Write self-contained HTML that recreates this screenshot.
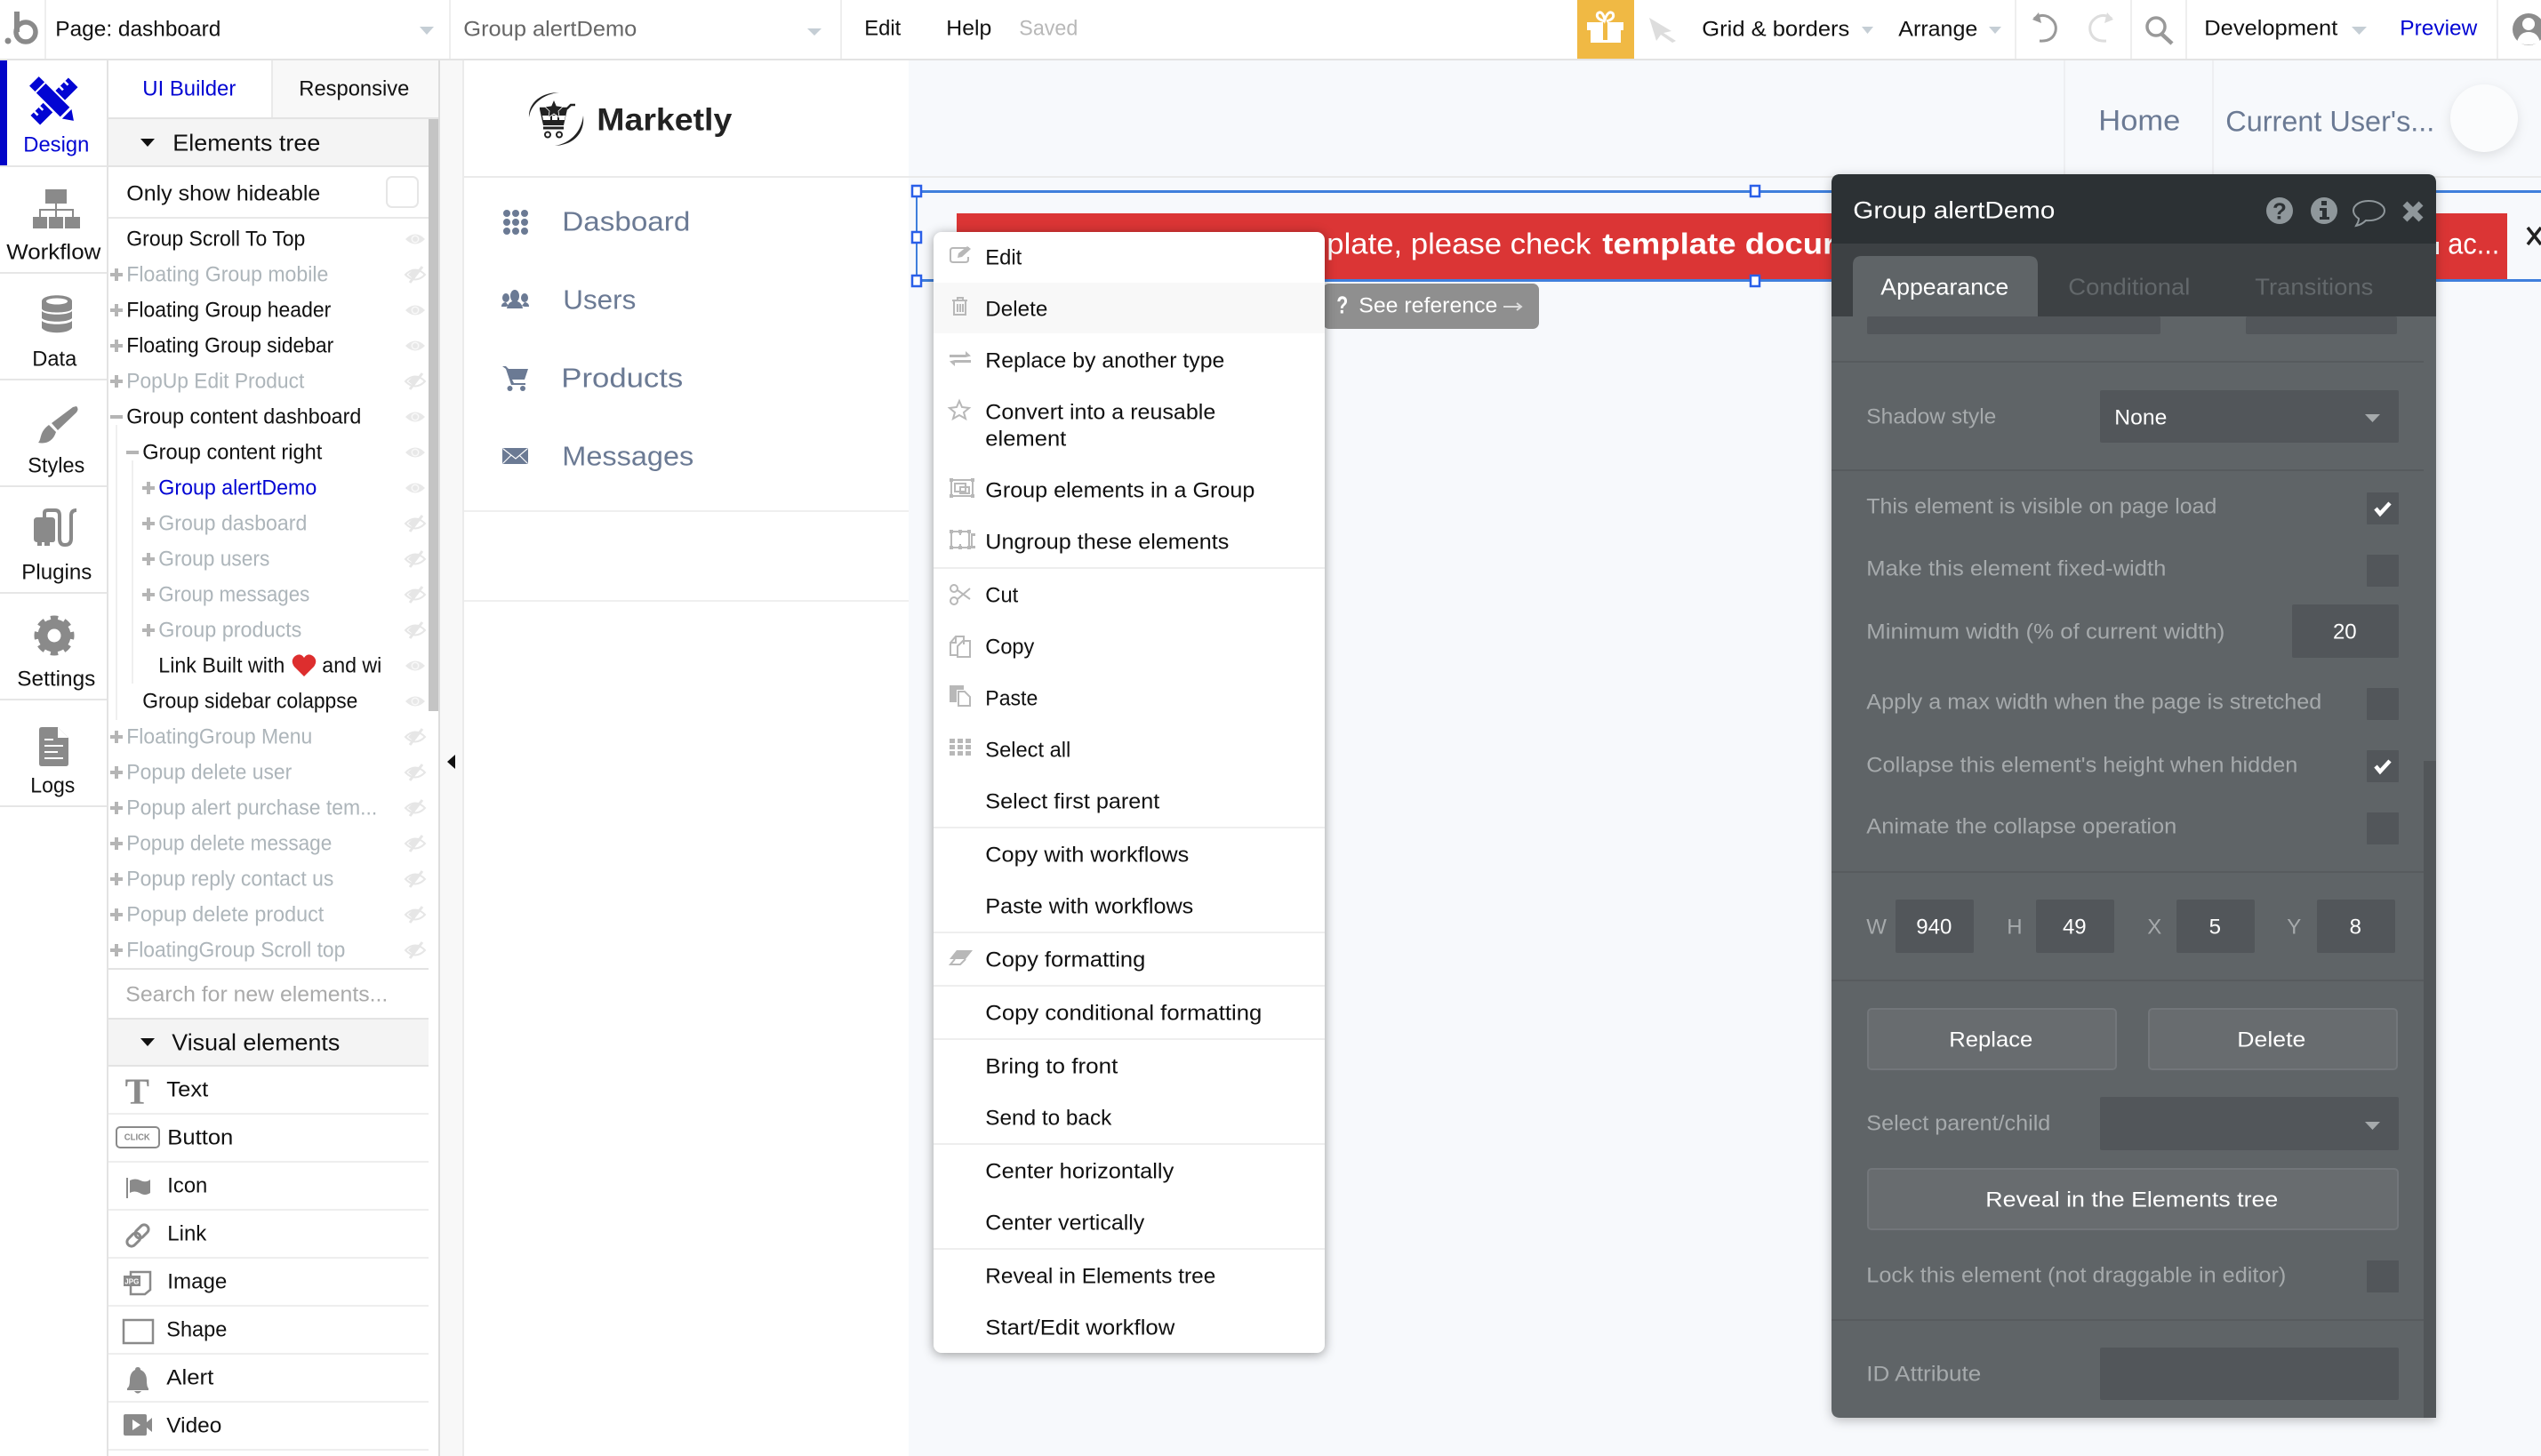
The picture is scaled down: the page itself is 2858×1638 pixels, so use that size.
<!DOCTYPE html>
<html><head><meta charset="utf-8"><title>Bubble editor</title>
<style>
html,body{margin:0;padding:0;background:#fff;width:2858px;height:1638px;overflow:hidden}
svg{display:block}
text{font-family:"Liberation Sans",sans-serif;font-size:24px;fill:#111;transform:translate(-.7px,-.4px)}
.g{fill:#adb5ba}.b{fill:#0205d3}.d{fill:#666}.s{fill:#6b7a94}.l{fill:#a6aaac}.w{fill:#fff}.c{fill:#69707a}
.i{fill:#8a8a8a}.mi{fill:none;stroke:#b8b8b8;stroke-width:2}.mf{fill:#b8b8b8}
</style></head><body>
<svg width="2858" height="1638" viewBox="0 0 2858 1638" xmlns="http://www.w3.org/2000/svg">
<defs>
<g id="eye"><path d="M-11 0Q0-11 11 0Q0 11-11 0Z" fill="#e8e8e8"/><circle r="4.500" fill="#f8f8f8"/><circle r="3" fill="#e8e8e8"/></g>
<g id="eo"><path d="M-11 0Q0-11 11 0Q0 11-11 0Z" fill="none" stroke="#e6e6e6" stroke-width="2"/><path d="M-6 9L8-9" stroke="#e6e6e6" stroke-width="3"/><path d="M-8 0Q-2-7 4-6L-3 4Z" fill="#e6e6e6"/></g>
<g id="pl"><path d="M-7 0H7M0-7V7" stroke="#b5b5b5" stroke-width="4"/></g>
<g id="mn"><path d="M-7 0H7" stroke="#b5b5b5" stroke-width="4"/></g>
<path id="chk" d="M-8 0L-3 6L8-6" fill="none" stroke="#fff" stroke-width="4.500"/>
</defs>

<rect width="2858" height="1638" fill="#fff"/>
<!-- canvas -->
<rect x="522" y="68" width="2336" height="1570" fill="#f7f9fc"/>
<rect x="522" y="68" width="500" height="1570" fill="#fff"/>
<rect x="495" y="68" width="25" height="1570" fill="#f8f8f8"/>
<rect x="520" y="68" width="2" height="1570" fill="#ebebeb"/>
<path d="M512 849V865L503 857Z" fill="#111"/>

<!-- page header -->
<rect x="522" y="198" width="2336" height="2" fill="#eaeaea"/>
<rect x="522" y="574" width="500" height="2" fill="#efefef"/>
<rect x="522" y="675" width="500" height="2" fill="#efefef"/>
<rect x="2321" y="68" width="2" height="130" fill="#eeeff2"/>
<rect x="2488" y="68" width="2" height="130" fill="#eeeff2"/>
<text class="s" x="2361" y="147" textLength="92" lengthAdjust="spacingAndGlyphs" style="font-size:32px">Home</text>
<text class="s" x="2504" y="148" textLength="235" lengthAdjust="spacingAndGlyphs" style="font-size:32px">Current User's...</text>
<circle cx="2794" cy="133" r="38" fill="#fbfcfd" style="filter:drop-shadow(0 4px 6px rgba(0,0,0,.1))"/>
<!-- logo -->
<path d="M629 104C606 104 594 118 595 132C597 118 610 106 629 104Z" fill="#222"/>
<path d="M656 130C658 150 645 163 624 164C642 161 654 148 656 130Z" fill="#222"/>
<path d="M607 122H638L642 118H647" fill="none" stroke="#222" stroke-width="2.500"/>
<path d="M607 123H638L634 141H611Z" fill="#222"/>
<path d="M610 130H619V135H611ZM621 130H627V135H621ZM629 130H636L635 135H629Z" fill="#fff"/>
<path d="M623 112L626 119L633 120L628 125L629 132L623 128L617 132L618 125L613 120L620 119Z" fill="#222" stroke="#fff" stroke-width=".8"/>
<path d="M611 144H634" stroke="#222" stroke-width="3"/>
<circle cx="616" cy="151.500" r="3" fill="none" stroke="#222" stroke-width="2"/><circle cx="629" cy="151.500" r="3" fill="none" stroke="#222" stroke-width="2"/>
<text x="672" y="147" textLength="152" lengthAdjust="spacingAndGlyphs" style="font-size:35px;font-weight:bold;fill:#222">Marketly</text>
<!-- sidebar nav -->
<g fill="#6b7a94">
<g><circle cx="570" cy="240" r="4"/><circle cx="580" cy="240" r="4"/><circle cx="590" cy="240" r="4"/><circle cx="570" cy="250" r="4"/><circle cx="580" cy="250" r="4"/><circle cx="590" cy="250" r="4"/><circle cx="570" cy="260" r="4"/><circle cx="580" cy="260" r="4"/><circle cx="590" cy="260" r="4"/></g>
<ellipse cx="569" cy="335" rx="4" ry="5"/><ellipse cx="590" cy="335" rx="4" ry="5"/>
<path d="M564 344Q565 340 569 340L572 344L569 345H564ZM595 344Q594 340 590 340L587 344L590 345H595Z"/>
<ellipse cx="579" cy="333" rx="5" ry="7"/>
<path d="M570 347Q571 341 576 339H582Q587 341 588 347Z"/>
<path d="M565 412H569L572 415H594L590 427H576L578 431H591V433H575L569 415Z"/><circle cx="573.500" cy="437" r="3"/><circle cx="588" cy="437" r="3"/>
<rect x="565" y="504" width="29" height="18" rx="2"/>
</g>
<path d="M566 505L580 516L593 505M566 521L575 512M593 521L584 512" fill="none" stroke="#fff" stroke-width="1.200"/>
<text class="s" x="633" y="260" textLength="144" lengthAdjust="spacingAndGlyphs" style="font-size:31px">Dasboard</text>
<text class="s" x="634" y="348" textLength="82" lengthAdjust="spacingAndGlyphs" style="font-size:31px">Users</text>
<text class="s" x="632" y="436" textLength="137" lengthAdjust="spacingAndGlyphs" style="font-size:31px">Products</text>
<text class="s" x="633" y="524" textLength="148" lengthAdjust="spacingAndGlyphs" style="font-size:31px">Messages</text>

<!-- red alert -->
<rect x="1076" y="240" width="1744" height="74" fill="#db3535"/>
<text class="w" x="1493" y="286" textLength="297" lengthAdjust="spacingAndGlyphs" style="font-size:33px">plate, please check</text>
<text class="w" x="1803" y="286" textLength="262" lengthAdjust="spacingAndGlyphs" style="font-size:33px;font-weight:bold">template docur</text>
<rect x="2740" y="272" width="3" height="14" fill="#fff"/>
<text class="w" x="2754" y="286" textLength="58" lengthAdjust="spacingAndGlyphs" style="font-size:33px">ac...</text>
<path d="M2843 256L2858 275M2858 256L2843 275" stroke="#222" stroke-width="3.500"/>
<!-- selection -->
<rect x="1031" y="214" width="1827" height="3" fill="#3f7fdc"/>
<rect x="1031" y="314" width="1827" height="3" fill="#3f7fdc"/>
<rect x="1030" y="215" width="2" height="100" fill="#3f7fdc"/>
<g fill="#fff" stroke="#2a5fe8" stroke-width="2.500">
<rect x="1026" y="209" width="10" height="12"/><rect x="1026" y="261" width="10" height="12"/><rect x="1026" y="310" width="10" height="12"/>
<rect x="1969" y="209" width="10" height="12"/><rect x="1969" y="310" width="10" height="12"/>
</g>

<!-- See reference -->
<rect x="1488" y="319" width="243" height="51" rx="7" fill="#8f8f8f"/>
<text class="w" x="1504" y="353" textLength="13" lengthAdjust="spacingAndGlyphs" style="font-size:28px;font-weight:bold">?</text>
<text x="1529" y="352" textLength="156" lengthAdjust="spacingAndGlyphs" style="font-size:24px;fill:#fff">See reference</text>
<path d="M1691 345H1711M1706 341L1711 345L1706 349" fill="none" stroke="#ddd" stroke-width="2"/>

<!-- context menu -->
<rect x="1050" y="261" width="440" height="1261" rx="9" fill="#fff" style="filter:drop-shadow(0 2px 6px rgba(0,0,0,.38))"/>
<rect x="1050" y="318" width="440" height="57" fill="#f8f8f8"/>
<g fill="#eee">
<rect x="1050" y="638" width="440" height="2"/><rect x="1050" y="930" width="440" height="2"/><rect x="1050" y="1048" width="440" height="2"/><rect x="1050" y="1108" width="440" height="2"/><rect x="1050" y="1168" width="440" height="2"/><rect x="1050" y="1286" width="440" height="2"/><rect x="1050" y="1404" width="440" height="2"/>
</g>
<text x="1109" y="298" textLength="41" lengthAdjust="spacingAndGlyphs">Edit</text>
<text x="1109" y="356" textLength="70" lengthAdjust="spacingAndGlyphs">Delete</text>
<text x="1109" y="414" textLength="269" lengthAdjust="spacingAndGlyphs">Replace by another type</text>
<text x="1109" y="472" textLength="259" lengthAdjust="spacingAndGlyphs">Convert into a reusable</text>
<text x="1109" y="502" textLength="91" lengthAdjust="spacingAndGlyphs">element</text>
<text x="1109" y="560" textLength="303" lengthAdjust="spacingAndGlyphs">Group elements in a Group</text>
<text x="1109" y="618" textLength="274" lengthAdjust="spacingAndGlyphs">Ungroup these elements</text>
<text x="1109" y="678" textLength="37" lengthAdjust="spacingAndGlyphs">Cut</text>
<text x="1109" y="736" textLength="55" lengthAdjust="spacingAndGlyphs">Copy</text>
<text x="1109" y="794" textLength="59" lengthAdjust="spacingAndGlyphs">Paste</text>
<text x="1109" y="852" textLength="96" lengthAdjust="spacingAndGlyphs">Select all</text>
<text x="1109" y="910" textLength="196" lengthAdjust="spacingAndGlyphs">Select first parent</text>
<text x="1109" y="970" textLength="229" lengthAdjust="spacingAndGlyphs">Copy with workflows</text>
<text x="1109" y="1028" textLength="234" lengthAdjust="spacingAndGlyphs">Paste with workflows</text>
<text x="1109" y="1088" textLength="180" lengthAdjust="spacingAndGlyphs">Copy formatting</text>
<text x="1109" y="1148" textLength="311" lengthAdjust="spacingAndGlyphs">Copy conditional formatting</text>
<text x="1109" y="1208" textLength="149" lengthAdjust="spacingAndGlyphs">Bring to front</text>
<text x="1109" y="1266" textLength="142" lengthAdjust="spacingAndGlyphs">Send to back</text>
<text x="1109" y="1326" textLength="212" lengthAdjust="spacingAndGlyphs">Center horizontally</text>
<text x="1109" y="1384" textLength="179" lengthAdjust="spacingAndGlyphs">Center vertically</text>
<text x="1109" y="1444" textLength="259" lengthAdjust="spacingAndGlyphs">Reveal in Elements tree</text>
<text x="1109" y="1502" textLength="213" lengthAdjust="spacingAndGlyphs">Start/Edit workflow</text>
<!-- menu icons -->
<path class="mi" d="M1090 279H1072Q1069 279 1069 282V292Q1069 295 1072 295H1086Q1089 295 1089 292V289"/>
<path class="mf" d="M1077 290L1078 285L1088 277L1092 280L1082 289Z"/>
<path class="mi" d="M1071 338H1088M1073 338V354H1086V338M1077 338V335H1083V338M1077 342V351M1080 342V351M1083 342V351"/>
<path class="mf" d="M1068 399H1086V395L1092 400.500L1086 402V402H1068ZM1092 408H1074V412L1068 406.500L1074 405H1092Z"/>
<path class="mi" d="M1079 451L1082 458L1090 459L1084 464L1086 471L1079 467L1072 471L1074 464L1068 459L1076 458Z"/>
<path class="mi" d="M1070 540H1094V558H1070ZM1074 544H1086V553H1074ZM1080 548H1090V555H1080Z"/>
<path class="mf" d="M1068 538h4v4h-4zM1092 538h4v4h-4zM1068 556h4v4h-4zM1092 556h4v4h-4z"/>
<path class="mi" d="M1070 598H1090V616H1070ZM1080 598V602M1080 612V616M1093 600V616"/>
<path class="mf" d="M1068 596h4v4h-4zM1078 596h4v4h-4zM1088 596h4v4h-4zM1068 614h4v4h-4zM1078 614h4v4h-4zM1088 614h4v4h-4zM1092 600h5v3h-5zM1092 614h5v3h-5z"/>
<circle class="mi" cx="1073" cy="662" r="4"/><circle class="mi" cx="1073" cy="676" r="4"/><path class="mi" d="M1077 664L1091 674M1077 674L1091 662"/>
<path class="mi" d="M1069 723L1075 716H1084V725M1075 716V723H1069V737H1077M1077 727L1083 721H1091V739H1077Z"/>
<path class="mf" d="M1068 771H1084V776H1076V790H1068Z"/><path class="mi" d="M1078 778H1085L1091 784V794H1078Z"/>
<path class="mf" d="M1068 831h6v5h-6zM1077 831h6v5h-6zM1086 831h6v5h-6zM1068 838h6v5h-6zM1077 838h6v5h-6zM1086 838h6v5h-6zM1068 845h6v5h-6zM1077 845h6v5h-6zM1086 845h6v5h-6z"/>
<path class="mf" d="M1076 1069H1094L1086 1079H1068Z"/><path class="mi" d="M1074 1079L1069 1085H1080L1086 1079"/>

<!-- property panel -->
<g style="filter:drop-shadow(0 3px 6px rgba(0,0,0,.25))"><path d="M2070 196H2730Q2740 196 2740 206V1595H2070Q2060 1595 2060 1585V206Q2060 196 2070 196Z" fill="#5f6467"/></g>
<path d="M2070 196H2730Q2740 196 2740 206V274H2060V206Q2060 196 2070 196Z" fill="#2c3134"/>
<rect x="2060" y="274" width="680" height="82" fill="#3d4144"/>
<path d="M2084 356V298Q2084 288 2094 288H2282Q2292 288 2292 298V356Z" fill="#5f6467"/>
<rect x="2100" y="356" width="330" height="20" rx="2" fill="#52565a"/>
<rect x="2526" y="356" width="170" height="20" rx="2" fill="#52565a"/>
<rect x="2726" y="856" width="14" height="739" fill="#525659"/>
<text class="w" x="2085" y="246" textLength="227" lengthAdjust="spacingAndGlyphs" style="font-size:27px">Group alertDemo</text>
<circle cx="2564" cy="237" r="15" fill="#8f979b"/><text x="2564.700" y="247" text-anchor="middle" style="font-size:26px;font-weight:bold;fill:#2c3134">?</text>
<circle cx="2614" cy="237" r="15" fill="#8f979b"/><path d="M2611 226h6v5h-6zM2609 234h8v10h3v3h-11v-3h3v-7h-3z" fill="#2c3134"/>
<path d="M2664 226C2654 226 2647 231 2647 237C2647 241 2650 244 2653 246C2653 250 2651 252 2650 254C2655 253 2659 250 2661 248C2674 249 2682 243 2682 237C2682 231 2674 226 2664 226Z" fill="none" stroke="#8f979b" stroke-width="2"/>
<path d="M2705 229L2723 247M2723 229L2705 247" stroke="#8f979b" stroke-width="7"/>
<text class="w" x="2116" y="332" textLength="144" lengthAdjust="spacingAndGlyphs" style="font-size:26px">Appearance</text>
<text x="2327" y="332" textLength="137" lengthAdjust="spacingAndGlyphs" style="font-size:26px;fill:#63686b">Conditional</text>
<text x="2537" y="332" textLength="133" lengthAdjust="spacingAndGlyphs" style="font-size:26px;fill:#63686b">Transitions</text>
<g fill="#575b5e"><rect x="2060" y="406" width="666" height="2"/><rect x="2060" y="528" width="666" height="2"/><rect x="2060" y="980" width="666" height="2"/><rect x="2060" y="1102" width="666" height="2"/><rect x="2060" y="1484" width="666" height="2"/></g>
<g fill="#52565a">
<rect x="2362" y="439" width="336" height="59" rx="2"/>
<rect x="2662" y="554" width="36" height="36" rx="1"/>
<rect x="2662" y="624" width="36" height="36" rx="1"/>
<rect x="2578" y="680" width="120" height="60" rx="2"/>
<rect x="2662" y="774" width="36" height="36" rx="1"/>
<rect x="2662" y="844" width="36" height="36" rx="1"/>
<rect x="2662" y="914" width="36" height="36" rx="1"/>
<rect x="2132" y="1012" width="88" height="60" rx="2"/><rect x="2290" y="1012" width="88" height="60" rx="2"/><rect x="2448" y="1012" width="88" height="60" rx="2"/><rect x="2606" y="1012" width="88" height="60" rx="2"/>
<rect x="2362" y="1234" width="336" height="60" rx="2"/>
<rect x="2662" y="1418" width="36" height="36" rx="1"/>
<rect x="2362" y="1516" width="336" height="59" rx="2"/>
</g>
<path d="M2660 466H2677L2668.500 475Z" fill="#a6aaac"/><path d="M2660 1262H2677L2668.500 1271Z" fill="#a6aaac"/>
<use href="#chk" x="2680" y="572"/><use href="#chk" x="2680" y="862"/>
<g fill="#686c6f" stroke="#72767a" stroke-width="2">
<rect x="2101" y="1135" width="279" height="68" rx="4"/><rect x="2417" y="1135" width="279" height="68" rx="4"/><rect x="2101" y="1315" width="596" height="68" rx="4"/>
</g>
<text class="l" x="2100" y="477" textLength="146" lengthAdjust="spacingAndGlyphs">Shadow style</text>
<text class="w" x="2379" y="478" textLength="59" lengthAdjust="spacingAndGlyphs">None</text>
<text class="l" x="2100" y="578" textLength="394" lengthAdjust="spacingAndGlyphs">This element is visible on page load</text>
<text class="l" x="2100" y="648" textLength="337" lengthAdjust="spacingAndGlyphs">Make this element fixed-width</text>
<text class="l" x="2100" y="719" textLength="403" lengthAdjust="spacingAndGlyphs">Minimum width (% of current width)</text>
<text class="w" x="2638" y="719" text-anchor="middle">20</text>
<text class="l" x="2100" y="798" textLength="512" lengthAdjust="spacingAndGlyphs">Apply a max width when the page is stretched</text>
<text class="l" x="2100" y="869" textLength="485" lengthAdjust="spacingAndGlyphs">Collapse this element's height when hidden</text>
<text class="l" x="2100" y="938" textLength="349" lengthAdjust="spacingAndGlyphs">Animate the collapse operation</text>
<text class="l" x="2100" y="1051">W</text><text class="l" x="2258" y="1051">H</text><text class="l" x="2416" y="1051">X</text><text class="l" x="2573" y="1051">Y</text>
<text class="w" x="2176" y="1051" text-anchor="middle">940</text><text class="w" x="2334" y="1051" text-anchor="middle">49</text><text class="w" x="2492" y="1051" text-anchor="middle">5</text><text class="w" x="2650" y="1051" text-anchor="middle">8</text>
<text class="w" x="2193" y="1178" textLength="94" lengthAdjust="spacingAndGlyphs">Replace</text>
<text class="w" x="2517" y="1178" textLength="77" lengthAdjust="spacingAndGlyphs">Delete</text>
<text class="l" x="2100" y="1272" textLength="207" lengthAdjust="spacingAndGlyphs">Select parent/child</text>
<text class="w" x="2234" y="1358" textLength="329" lengthAdjust="spacingAndGlyphs">Reveal in the Elements tree</text>
<text class="l" x="2100" y="1443" textLength="472" lengthAdjust="spacingAndGlyphs">Lock this element (not draggable in editor)</text>
<text class="l" x="2100" y="1554" textLength="129" lengthAdjust="spacingAndGlyphs">ID Attribute</text>

<!-- left nav -->
<rect x="0" y="68" width="120" height="1570" fill="#fff"/>
<rect x="120" y="68" width="2" height="1570" fill="#e3e3e3"/>
<rect x="0" y="68" width="8" height="119" fill="#0205c8"/>
<g fill="#e6e6e6"><rect x="0" y="186" width="120" height="2"/><rect x="0" y="306" width="120" height="2"/><rect x="0" y="426" width="120" height="2"/><rect x="0" y="546" width="120" height="2"/><rect x="0" y="666" width="120" height="2"/><rect x="0" y="786" width="120" height="2"/><rect x="0" y="906" width="120" height="2"/></g>
<!-- design icon: ruler + pencil -->
<g transform="translate(61 114) rotate(-45)">
<rect x="-30" y="-7.500" width="60" height="15" fill="#0205d3"/>
<path d="M-24-7.500V-2M-16-7.500V-2M16-7.500V-2M24-7.500V-2" stroke="#fff" stroke-width="2.500"/>
</g>
<g transform="translate(61 114) rotate(45)">
<rect x="-20" y="-9.500" width="42" height="19" fill="#fff"/>
<rect x="-32" y="-7.500" width="9" height="15" fill="#0205d3"/>
<rect x="-21" y="-7.500" width="38" height="15" fill="#0205d3"/>
<path d="M20-7.500L31 0L20 7.500Z" fill="#0205d3"/>
<path d="M-18 9H19" stroke="#fff" stroke-width="2"/>
</g>
<text class="b" x="27" y="171" textLength="74" lengthAdjust="spacingAndGlyphs">Design</text>
<g class="i">
<rect x="51" y="213" width="24" height="16"/><rect x="37" y="244" width="16" height="13"/><rect x="55" y="244" width="16" height="13"/><rect x="73" y="244" width="17" height="13"/>
</g>
<path d="M63 229V244M45 244V236H82V244" fill="none" stroke="#8a8a8a" stroke-width="2"/>
<text x="8" y="292" textLength="106" lengthAdjust="spacingAndGlyphs">Workflow</text>
<g fill="#8a8a8a">
<path d="M47 339C47 330 81 330 81 339V347C81 353 47 353 47 347Z"/>
<path d="M47 350C52 355 76 355 81 350V358C76 363 52 363 47 358Z"/>
<path d="M47 361C52 366 76 366 81 361V369C76 376 52 376 47 369Z"/>
</g>
<ellipse cx="64" cy="339" rx="12" ry="3.500" fill="#fff"/>
<text x="37" y="412" textLength="50" lengthAdjust="spacingAndGlyphs">Data</text>
<path d="M86 457Q89 460 86 464L65 484L58 476L82 458ZM55 478L63 486C60 496 52 500 43 498C47 494 44 486 55 478Z" fill="#8a8a8a"/>
<text x="32" y="532" textLength="64" lengthAdjust="spacingAndGlyphs">Styles</text>
<path d="M38 586Q38 582 42 582H58Q62 582 62 586V607Q62 610 59 610H56V614H50V610H47V614H42V610Q38 610 38 606Z" fill="#8a8a8a"/>
<path d="M50 582V577Q50 574 54 574H62Q67 574 67 580V606Q67 613 73 613Q80 613 80 606V580Q80 574 86 574" fill="none" stroke="#8a8a8a" stroke-width="4"/>
<text x="25" y="652" textLength="79" lengthAdjust="spacingAndGlyphs">Plugins</text>
<circle cx="61" cy="715" r="13" fill="none" stroke="#8a8a8a" stroke-width="11"/>
<circle cx="61" cy="715" r="19" fill="none" stroke="#8a8a8a" stroke-width="7" stroke-dasharray="7.900 7.023" stroke-dashoffset="4"/>
<text x="20" y="772" textLength="88" lengthAdjust="spacingAndGlyphs">Settings</text>
<path d="M44 821Q44 818 47 818H65L77 830V859Q77 862 74 862H47Q44 862 44 859Z" fill="#8a8a8a"/>
<path d="M65 818V830H77" fill="#fff"/>
<path d="M50 832H60M50 839H71M50 846H65M50 853H71" stroke="#fff" stroke-width="2"/>
<text x="35" y="892" textLength="50" lengthAdjust="spacingAndGlyphs">Logs</text>

<!-- elements panel -->
<rect x="122" y="68" width="371" height="1570" fill="#fff"/>
<rect x="493" y="68" width="2" height="1570" fill="#ddd"/>
<rect x="307" y="68" width="186" height="64" fill="#f8f8f8"/>
<rect x="305" y="68" width="2" height="64" fill="#eaeaea"/>
<rect x="122" y="132" width="371" height="2" fill="#e3e3e3"/>
<text class="b" x="161" y="108" textLength="105" lengthAdjust="spacingAndGlyphs">UI Builder</text>
<text x="337" y="108" textLength="124" lengthAdjust="spacingAndGlyphs">Responsive</text>
<rect x="122" y="134" width="360" height="52" fill="#f4f4f4"/>
<rect x="482" y="134" width="11" height="666" fill="#c4c4c4"/>
<rect x="122" y="186" width="360" height="2" fill="#e3e3e3"/>
<path d="M158 156H174L166 165Z" fill="#111"/>
<text x="195" y="170" textLength="166" lengthAdjust="spacingAndGlyphs" style="font-size:26px">Elements tree</text>
<text x="143" y="226" textLength="218" lengthAdjust="spacingAndGlyphs">Only show hideable</text>
<rect x="435" y="199" width="35" height="34" rx="6" fill="#fff" stroke="#e6e6e6" stroke-width="2"/>
<rect x="122" y="244" width="360" height="2" fill="#e8e8e8"/>
<path d="M131 478V810M149 518V769" stroke="#efefef" stroke-width="2" fill="none"/>

<text x="143" y="277" textLength="201" lengthAdjust="spacingAndGlyphs">Group Scroll To Top</text>
<text class="g" x="143" y="317" textLength="227" lengthAdjust="spacingAndGlyphs">Floating Group mobile</text>
<text x="143" y="357" textLength="230" lengthAdjust="spacingAndGlyphs">Floating Group header</text>
<text x="143" y="397" textLength="233" lengthAdjust="spacingAndGlyphs">Floating Group sidebar</text>
<text class="g" x="143" y="437" textLength="200" lengthAdjust="spacingAndGlyphs">PopUp Edit Product</text>
<text x="143" y="477" textLength="264" lengthAdjust="spacingAndGlyphs">Group content dashboard</text>
<text x="161" y="517" textLength="202" lengthAdjust="spacingAndGlyphs">Group content right</text>
<text class="b" x="179" y="557" textLength="178" lengthAdjust="spacingAndGlyphs">Group alertDemo</text>
<text class="g" x="179" y="597" textLength="167" lengthAdjust="spacingAndGlyphs">Group dasboard</text>
<text class="g" x="179" y="637" textLength="125" lengthAdjust="spacingAndGlyphs">Group users</text>
<text class="g" x="179" y="677" textLength="170" lengthAdjust="spacingAndGlyphs">Group messages</text>
<text class="g" x="179" y="717" textLength="161" lengthAdjust="spacingAndGlyphs">Group products</text>
<text x="179" y="757" textLength="142" lengthAdjust="spacingAndGlyphs">Link Built with</text>
<path d="M342 761L331 750Q326 743 332 738Q338 734 342 740Q346 734 352 738Q358 743 353 750Z" fill="#dd2e2e"/>
<text x="363" y="757" textLength="67" lengthAdjust="spacingAndGlyphs">and wi</text>
<text x="161" y="797" textLength="242" lengthAdjust="spacingAndGlyphs">Group sidebar colappse</text>
<text class="g" x="143" y="837" textLength="209" lengthAdjust="spacingAndGlyphs">FloatingGroup Menu</text>
<text class="g" x="143" y="877" textLength="186" lengthAdjust="spacingAndGlyphs">Popup delete user</text>
<text class="g" x="143" y="917" textLength="282" lengthAdjust="spacingAndGlyphs">Popup alert purchase tem...</text>
<text class="g" x="143" y="957" textLength="231" lengthAdjust="spacingAndGlyphs">Popup delete message</text>
<text class="g" x="143" y="997" textLength="233" lengthAdjust="spacingAndGlyphs">Popup reply contact us</text>
<text class="g" x="143" y="1037" textLength="222" lengthAdjust="spacingAndGlyphs">Popup delete product</text>
<text class="g" x="143" y="1077" textLength="246" lengthAdjust="spacingAndGlyphs">FloatingGroup Scroll top</text>

<use href="#pl" x="131" y="309"/><use href="#pl" x="131" y="349"/><use href="#pl" x="131" y="389"/><use href="#pl" x="131" y="429"/><use href="#mn" x="131" y="469"/><use href="#mn" x="149" y="509"/>
<use href="#pl" x="167" y="549"/><use href="#pl" x="167" y="589"/><use href="#pl" x="167" y="629"/><use href="#pl" x="167" y="669"/><use href="#pl" x="167" y="709"/>
<use href="#pl" x="131" y="829"/><use href="#pl" x="131" y="869"/><use href="#pl" x="131" y="909"/><use href="#pl" x="131" y="949"/><use href="#pl" x="131" y="989"/><use href="#pl" x="131" y="1029"/><use href="#pl" x="131" y="1069"/>
<use href="#eye" x="467" y="269"/><use href="#eo" x="467" y="309"/><use href="#eye" x="467" y="349"/><use href="#eye" x="467" y="389"/><use href="#eo" x="467" y="429"/><use href="#eye" x="467" y="469"/><use href="#eye" x="467" y="509"/><use href="#eye" x="467" y="549"/>
<use href="#eo" x="467" y="589"/><use href="#eo" x="467" y="629"/><use href="#eo" x="467" y="669"/><use href="#eo" x="467" y="709"/><use href="#eye" x="467" y="749"/><use href="#eye" x="467" y="789"/>
<use href="#eo" x="467" y="829"/><use href="#eo" x="467" y="869"/><use href="#eo" x="467" y="909"/><use href="#eo" x="467" y="949"/><use href="#eo" x="467" y="989"/><use href="#eo" x="467" y="1029"/><use href="#eo" x="467" y="1069"/>

<rect x="122" y="1089" width="360" height="2" fill="#e3e3e3"/>
<text x="142" y="1127" textLength="295" lengthAdjust="spacingAndGlyphs" style="fill:#aaa">Search for new elements...</text>
<rect x="122" y="1145" width="360" height="2" fill="#e3e3e3"/>
<rect x="122" y="1147" width="360" height="51" fill="#f4f4f4"/>
<rect x="122" y="1198" width="360" height="2" fill="#e3e3e3"/>
<path d="M158 1168H174L166 1177Z" fill="#111"/>
<text x="194" y="1182" textLength="189" lengthAdjust="spacingAndGlyphs" style="font-size:26px">Visual elements</text>
<g fill="#eee"><rect x="122" y="1252" width="360" height="2"/><rect x="122" y="1306" width="360" height="2"/><rect x="122" y="1360" width="360" height="2"/><rect x="122" y="1414" width="360" height="2"/><rect x="122" y="1468" width="360" height="2"/><rect x="122" y="1522" width="360" height="2"/><rect x="122" y="1576" width="360" height="2"/><rect x="122" y="1630" width="360" height="2"/></g>
<text x="188" y="1234" textLength="47" lengthAdjust="spacingAndGlyphs">Text</text>
<text x="189" y="1288" textLength="74" lengthAdjust="spacingAndGlyphs">Button</text>
<text x="189" y="1342" textLength="45" lengthAdjust="spacingAndGlyphs">Icon</text>
<text x="189" y="1396" textLength="44" lengthAdjust="spacingAndGlyphs">Link</text>
<text x="189" y="1450" textLength="67" lengthAdjust="spacingAndGlyphs">Image</text>
<text x="188" y="1504" textLength="68" lengthAdjust="spacingAndGlyphs">Shape</text>
<text x="188" y="1558" textLength="53" lengthAdjust="spacingAndGlyphs">Alert</text>
<text x="188" y="1612" textLength="62" lengthAdjust="spacingAndGlyphs">Video</text>
<text x="155" y="1242" text-anchor="middle" style="font-family:'Liberation Serif',serif;font-weight:bold;font-size:41px;fill:#8a8a8a">T</text>
<rect x="131" y="1268" width="48" height="23" rx="4" fill="none" stroke="#8a8a8a" stroke-width="2"/>
<text x="155" y="1283" text-anchor="middle" textLength="29" lengthAdjust="spacingAndGlyphs" style="font-size:10px;font-weight:bold;fill:#8a8a8a">CLICK</text>
<path d="M143 1325V1348" stroke="#8a8a8a" stroke-width="2"/><path d="M146 1328Q152 1325 158 1328Q164 1331 169 1327V1342Q163 1346 157 1342Q151 1339 146 1342Z" fill="#8a8a8a"/>
<g fill="none" stroke="#8a8a8a" stroke-width="3"><rect x="-5" y="-15" width="10" height="17" rx="5" transform="translate(155 1390) rotate(45)"/><rect x="-5" y="-2" width="10" height="17" rx="5" transform="translate(155 1390) rotate(45)"/></g>
<path d="M147 1431H169V1451L163 1456H147Z" fill="none" stroke="#8a8a8a" stroke-width="2.500"/><rect x="139" y="1435" width="19" height="12" fill="#8a8a8a"/>
<text x="149" y="1445" text-anchor="middle" style="font-size:8px;font-weight:bold;fill:#fff">JPG</text>
<rect x="139" y="1485" width="33" height="26" fill="none" stroke="#8a8a8a" stroke-width="2.500"/>
<path d="M155 1538Q158 1538 158 1541Q165 1544 165 1553Q165 1560 167 1562V1564H143V1562Q146 1560 146 1553Q146 1544 152 1541Q152 1538 155 1538ZM151 1565H159Q155 1570 151 1565Z" fill="#8a8a8a"/>
<rect x="139" y="1591" width="26" height="24" rx="2" fill="#8a8a8a"/><path d="M165 1600L171 1595V1611L165 1606Z" fill="#8a8a8a"/><path d="M149 1597L158 1603L149 1609Z" fill="#fff"/>

<!-- top bar -->
<rect x="0" y="0" width="2858" height="66" fill="#fff"/>
<rect x="0" y="66" width="2858" height="2" fill="#e3e3e3"/>
<g fill="#eee"><rect x="50" y="0" width="2" height="66"/><rect x="505" y="0" width="2" height="66"/><rect x="945" y="0" width="2" height="66"/><rect x="2266" y="0" width="2" height="66"/><rect x="2396" y="0" width="2" height="66"/><rect x="2458" y="0" width="2" height="66"/><rect x="2808" y="0" width="2" height="66"/></g>
<path d="M19 13V36" stroke="#8a8a8a" stroke-width="6"/><circle cx="29" cy="36" r="11" fill="none" stroke="#8a8a8a" stroke-width="5.500"/><circle cx="9" cy="46" r="3.500" fill="#8a8a8a"/>
<text x="63" y="41" textLength="186" lengthAdjust="spacingAndGlyphs">Page: dashboard</text>
<path d="M472 30H488L480 39Z" fill="#c5ced5"/>
<text class="d" x="522" y="41" textLength="195" lengthAdjust="spacingAndGlyphs">Group alertDemo</text>
<path d="M908 32H924L916 40Z" fill="#c5ced5"/>
<text x="973" y="40" textLength="41" lengthAdjust="spacingAndGlyphs">Edit</text>
<text x="1065" y="40" textLength="51" lengthAdjust="spacingAndGlyphs">Help</text>
<text x="1147" y="40" textLength="66" lengthAdjust="spacingAndGlyphs" style="fill:#b8b8b8">Saved</text>
<rect x="1774" y="0" width="64" height="66" fill="#f0b944"/>
<path d="M1785 25H1826V34H1823V48H1789V34H1785Z" fill="#fff"/><rect x="1803" y="25" width="5" height="20" fill="#f0b944"/>
<path d="M1805 24Q1794 21 1797 15Q1802 11 1805 22Q1809 11 1814 15Q1817 21 1807 24" fill="none" stroke="#fff" stroke-width="3"/>
<path d="M1855 20L1880 35L1871 37L1885 46L1881 48L1868 39L1863 46Z" fill="#ddd"/>
<text x="1915" y="41" textLength="166" lengthAdjust="spacingAndGlyphs">Grid &amp; borders</text>
<path d="M2094 30H2107L2100.500 38Z" fill="#c5ced5"/>
<text x="2136" y="41" textLength="89" lengthAdjust="spacingAndGlyphs">Arrange</text>
<path d="M2237 30H2251L2244 38Z" fill="#c5ced5"/>
<path d="M2288 21Q2296 15 2304 19Q2314 25 2312 35Q2309 47 2294 46" fill="none" stroke="#999" stroke-width="3"/><path d="M2293 14L2286 22L2296 26Z" fill="#999"/>
<path d="M2375 21Q2367 15 2359 19Q2349 25 2351 35Q2354 47 2369 46" fill="none" stroke="#ddd" stroke-width="3"/><path d="M2370 14L2377 22L2367 26Z" fill="#ddd"/>
<circle cx="2425" cy="30" r="10" fill="none" stroke="#999" stroke-width="3.500"/><path d="M2431 38L2443 49" stroke="#999" stroke-width="4.500"/>
<text x="2480" y="40" textLength="150" lengthAdjust="spacingAndGlyphs">Development</text>
<path d="M2645 30H2662L2653.500 39Z" fill="#c5ced5"/>
<text class="b" x="2700" y="40" textLength="87" lengthAdjust="spacingAndGlyphs">Preview</text>
<circle cx="2844" cy="33" r="18" fill="#8c8c8c"/><circle cx="2844" cy="27" r="7" fill="#fff"/><path d="M2831 47Q2834 36 2844 36Q2854 36 2857 47Q2844 54 2831 47Z" fill="#fff"/>
</svg>
</body></html>
